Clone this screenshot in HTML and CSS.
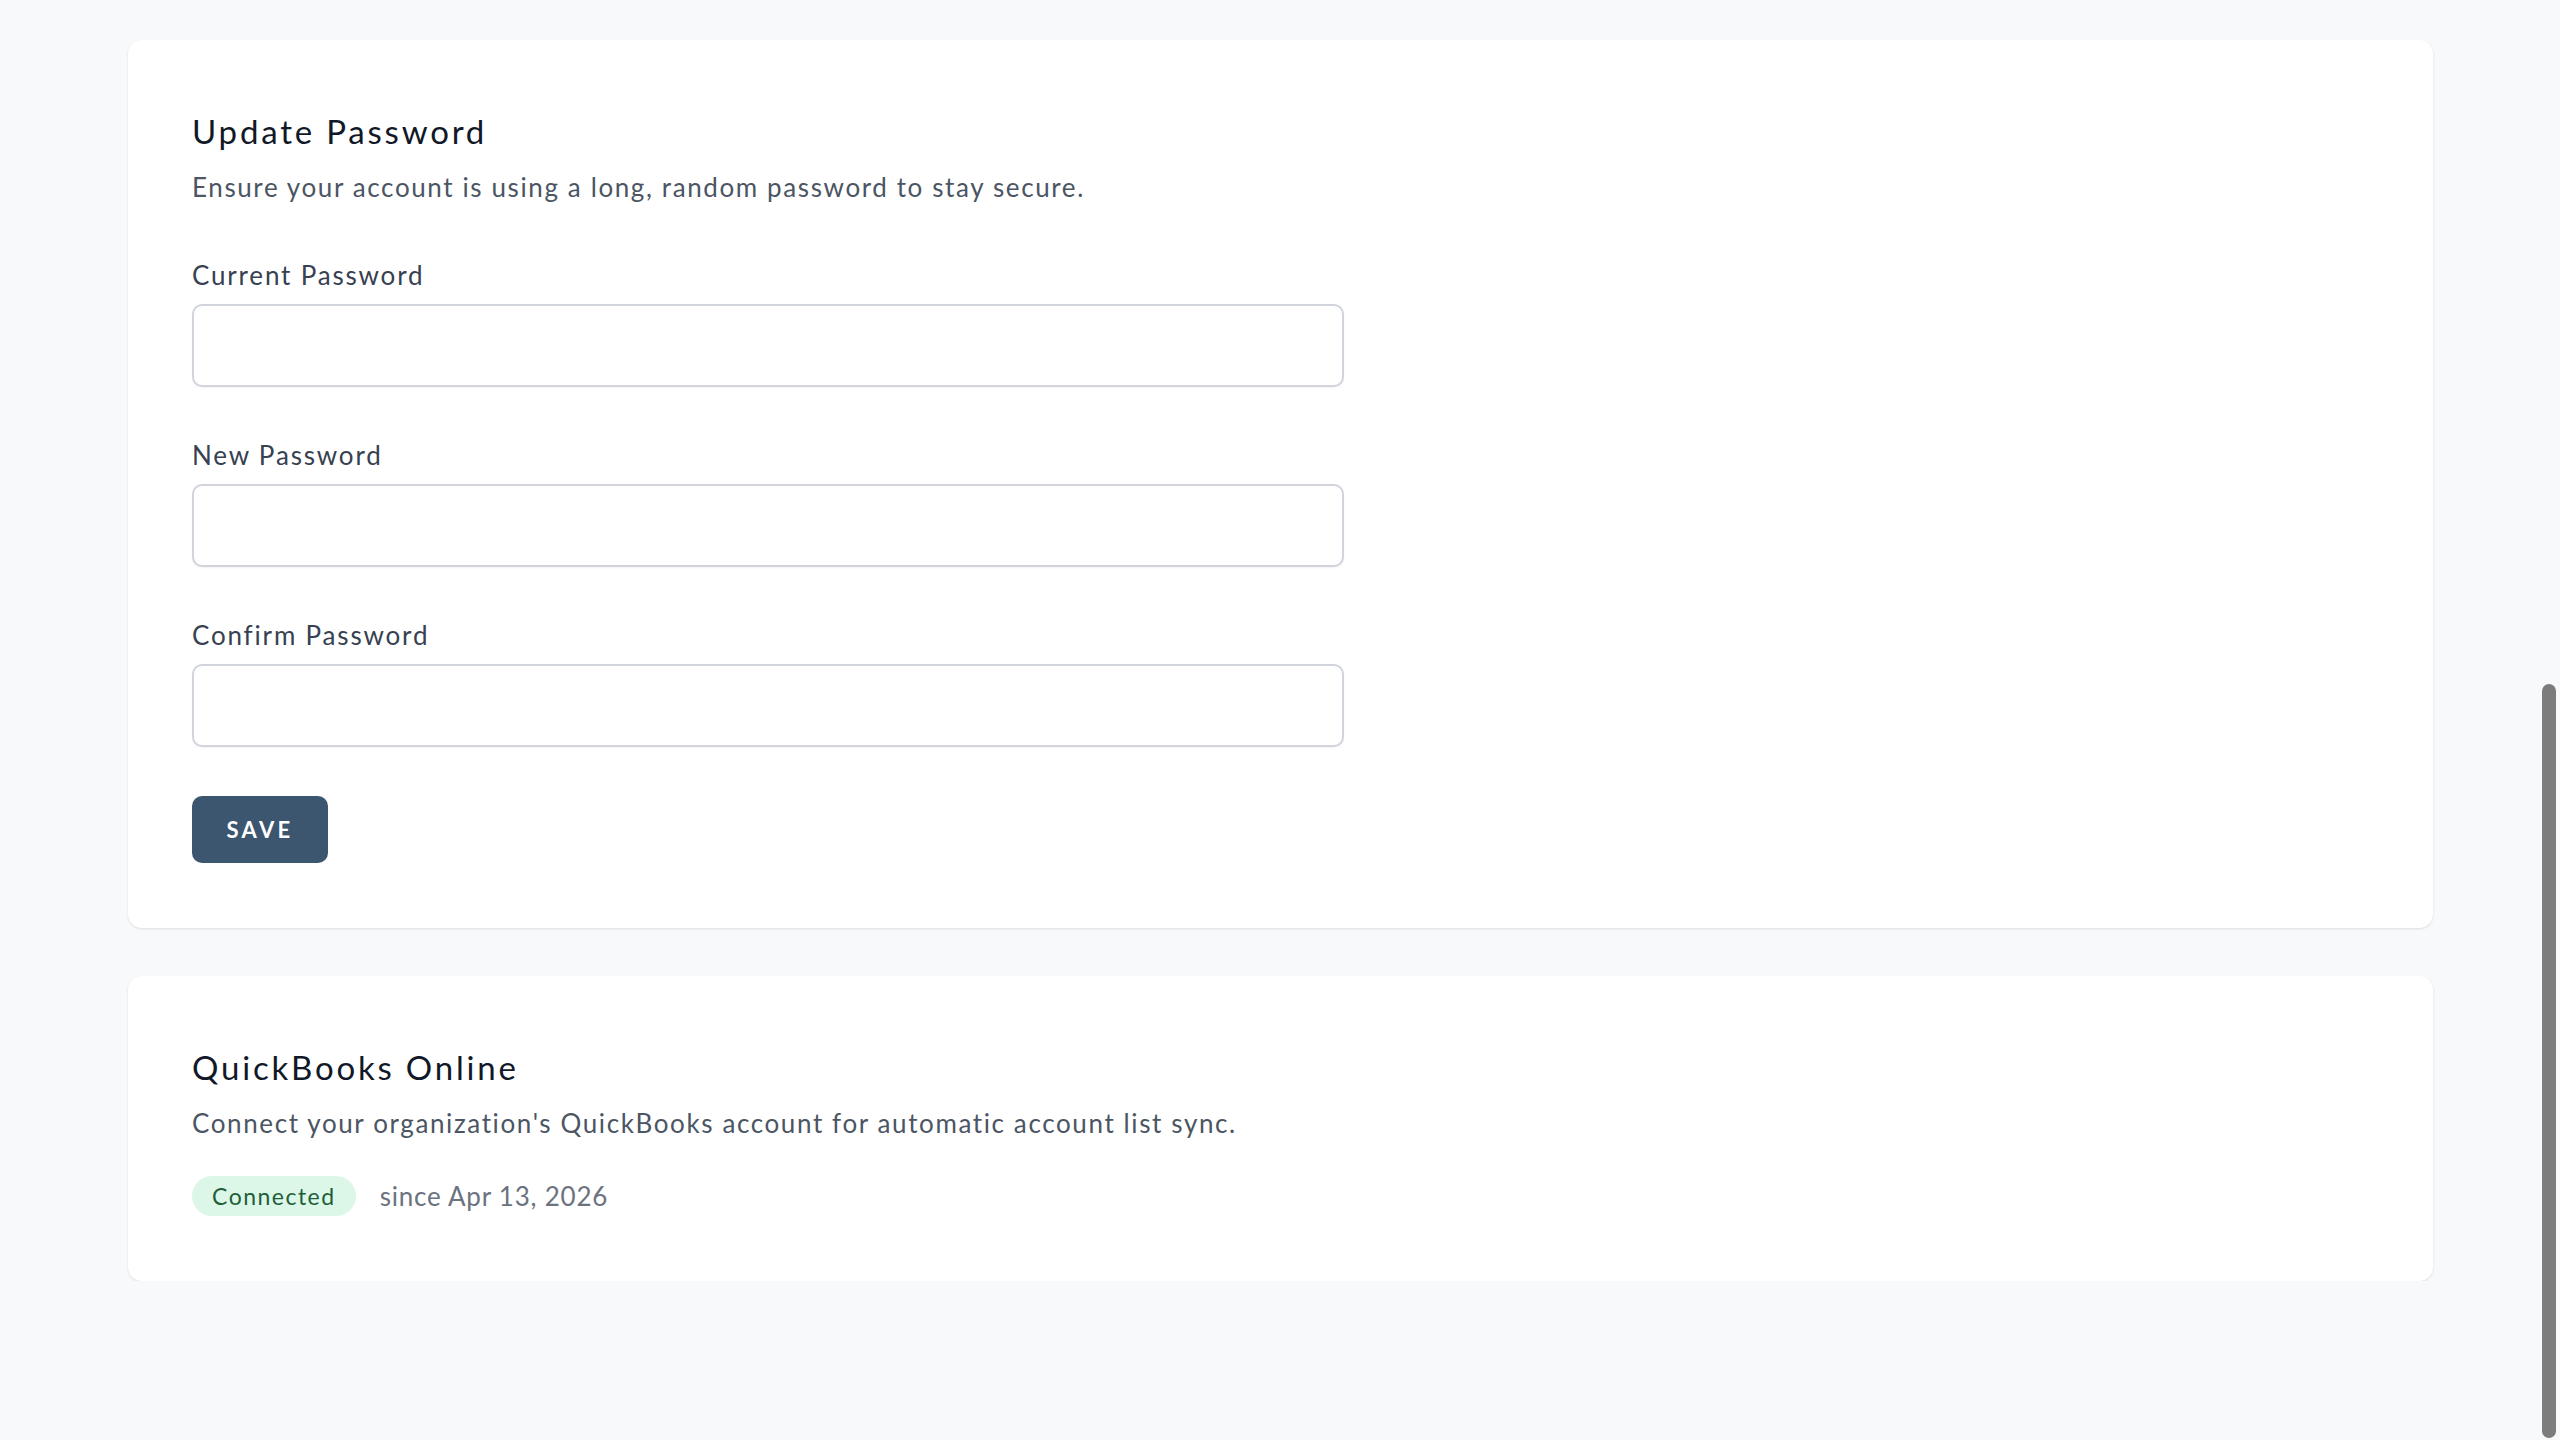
FILE: index.html
```html
<!DOCTYPE html>
<html lang="en">
<head>
    <meta charset="UTF-8">
    <title>Account Settings</title>
    <link rel="stylesheet" href="styles.css">
</head>
<body>
    <div class="page">
        <section class="card pw">
            <h2 class="card-title">Update Password</h2>
            <p class="card-desc">Ensure your account is using a long, random password to stay secure.</p>

            <div class="form-group first">
                <label for="current_password">Current Password</label>
                <input type="password" id="current_password">
            </div>

            <div class="form-group">
                <label for="password">New Password</label>
                <input type="password" id="password">
            </div>

            <div class="form-group">
                <label for="password_confirmation">Confirm Password</label>
                <input type="password" id="password_confirmation">
            </div>

            <button class="btn-save">Save</button>
        </section>

        <section class="card qb">
            <h2 class="card-title">QuickBooks Online</h2>
            <p class="card-desc">Connect your organization's QuickBooks account for automatic account list sync.</p>

            <div class="status-row">
                <span class="badge">Connected</span>
                <span class="since">since Apr 13, 2026</span>
            </div>
        </section>
    </div>

    <!-- scrolled to the bottom, thumb drawn over the page -->
    <div class="scroll-thumb"></div>
</body>
</html>
```

FILE: styles.css
```css
body { margin: 0; background-color: #f8f9fb; font-family: Lato, "Open Sans", Arial, sans-serif; color: #111827; }
.page { display: flex; flex-direction: column; gap: 48px; padding: 40px 127px 0 128px; }
.card { background-color: #fff; border-radius: 14px; padding: 64px; box-shadow: 0 1px 3px rgba(0,0,0,0.08), 0 1px 2px rgba(0,0,0,0.04); }
.card.pw { padding-bottom: 65px; }
.card.qb { padding-bottom: 65px; }
.card-title { margin: 0; font-size: 33px; line-height: 54px; font-weight: 400; letter-spacing: 0.085em; color: #111827; }
.card-desc { margin: 10px 0 0; font-size: 26px; line-height: 38px; letter-spacing: 0.062em; color: #4b5563; }
.form-group { margin-top: 49px; width: 1152px; }
.form-group.first { margin-top: 50px; }
label { display: block; font-size: 26px; line-height: 38px; letter-spacing: 0.07em; color: #374151; margin-bottom: 10px; }
input { display: block; width: 100%; height: 83px; box-sizing: border-box; border: 2px solid #d1d5db; border-radius: 10px; box-shadow: 0 1px 2px rgba(0,0,0,0.05); font-size: 26px; padding: 0 20px; }
.btn-save { display: block; margin-top: 49px; width: 136px; height: 67px; border: none; border-radius: 10px; background-color: #3d5670; color: #fff; font-family: Lato, Arial, sans-serif; font-size: 22px; font-weight: 700; letter-spacing: 0.15em; text-transform: uppercase; cursor: pointer; }
.status-row { display: flex; align-items: center; gap: 24px; margin-top: 34px; }
.badge { display: inline-flex; align-items: center; height: 40px; padding: 0 20px; border-radius: 20px; background-color: #dcf7e7; color: #1f5e3a; font-size: 23px; letter-spacing: 0.065em; }
.since { font-size: 26px; letter-spacing: 0.03em; color: #6b7280; }
.scroll-thumb { position: fixed; right: 4px; top: 684px; bottom: 2px; width: 14px; border-radius: 7px; background-color: #7b7c7b; }
```
